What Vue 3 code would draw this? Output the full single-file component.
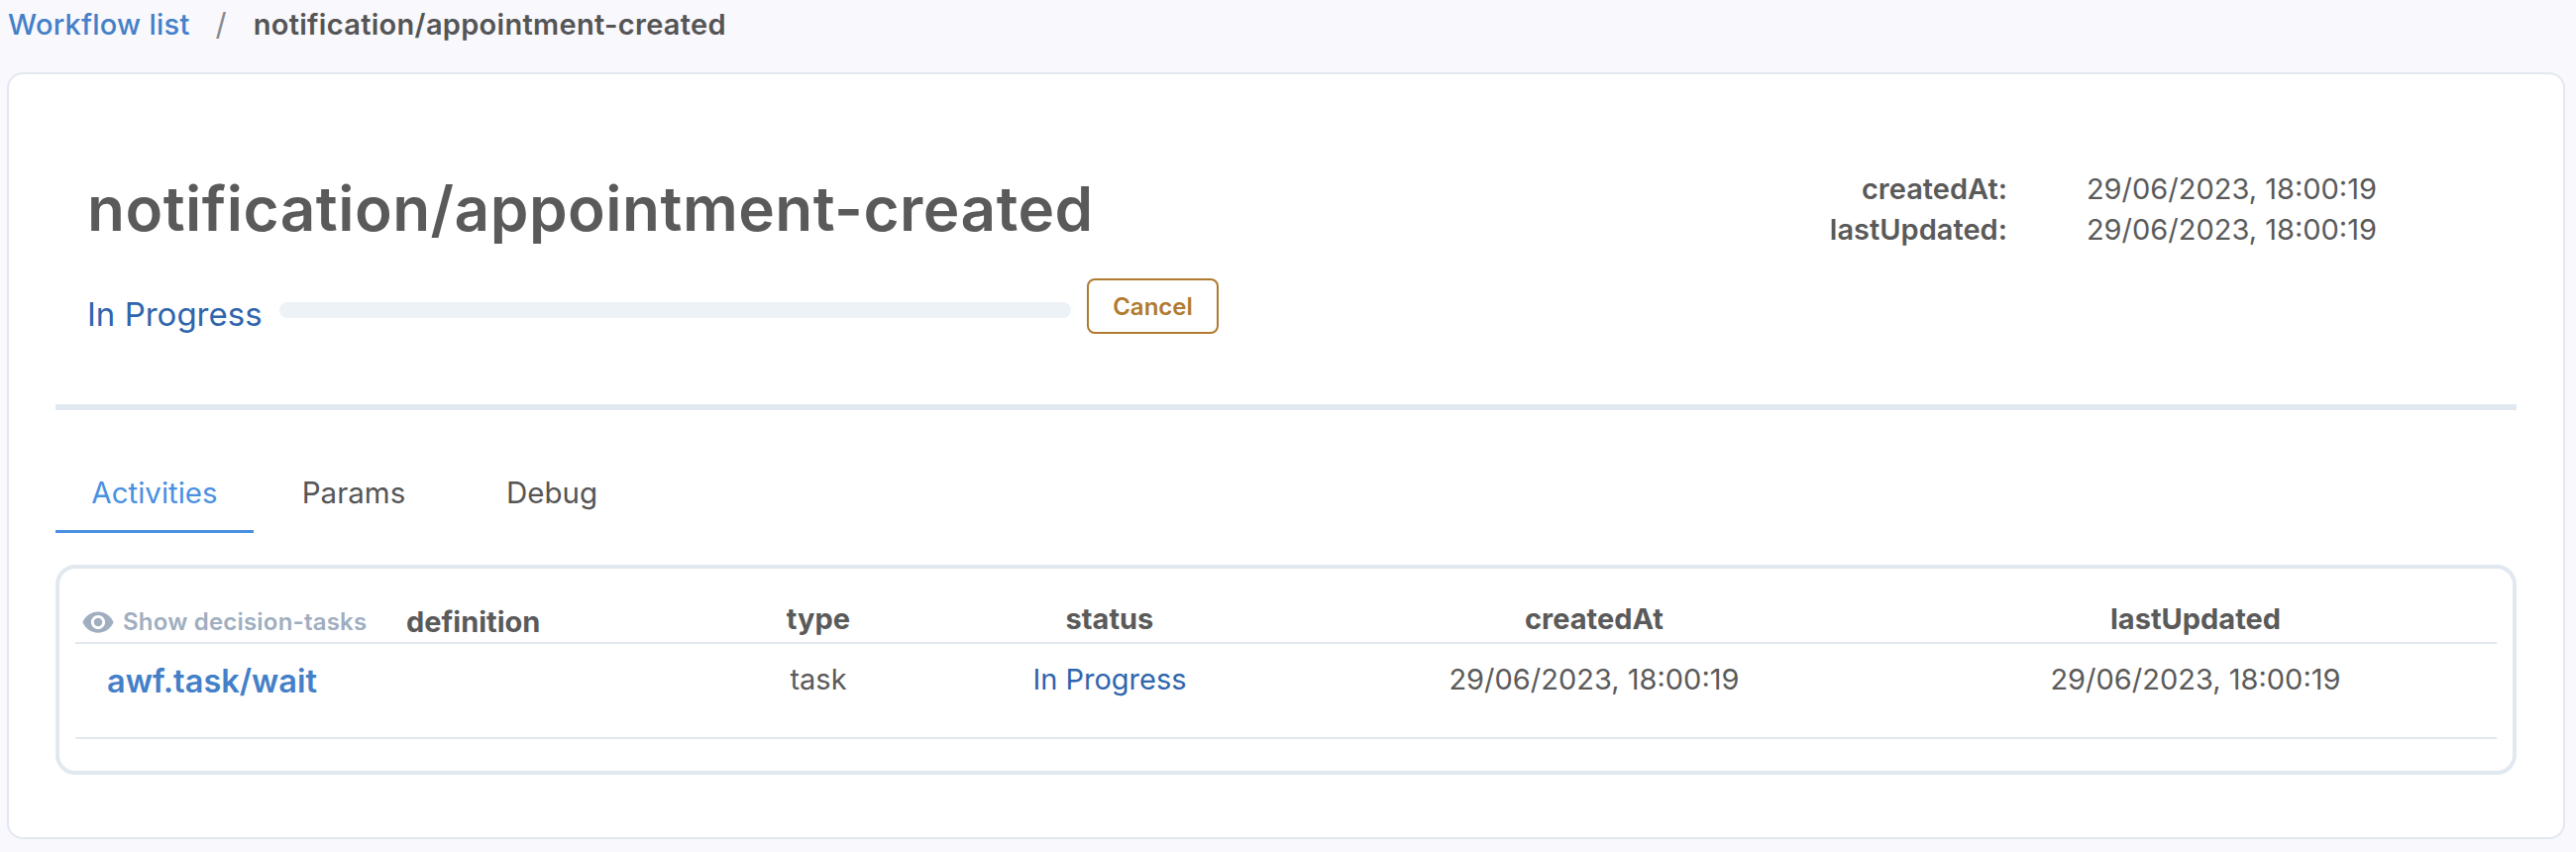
<template>
  <div class="page">
    <nav class="breadcrumb">
      <a class="crumb-link">Workflow list</a>
      <span class="crumb-sep">/</span>
      <span class="crumb-current">{{ workflow.name }}</span>
    </nav>

    <main class="card">
      <header class="summary">
        <div class="summary-left">
          <h1 class="title">{{ workflow.name }}</h1>
          <div class="progress-row">
            <span class="progress-label">{{ workflow.status }}</span>
            <div class="progress-bar"></div>
            <button class="cancel-btn">Cancel</button>
          </div>
        </div>
        <dl class="meta">
          <template v-for="item in meta" :key="item.label">
            <dt>{{ item.label }}:</dt>
            <dd>{{ item.value }}</dd>
          </template>
        </dl>
      </header>

      <div class="divider"></div>

      <div class="tabs">
        <div
          v-for="tab in tabs"
          :key="tab.label"
          class="tab"
          :class="[tab.cls, { active: tab.label === currentTab }]"
        >
          {{ tab.label }}
        </div>
      </div>

      <section class="table-box">
        <div class="table-row table-head">
          <div class="head-first">
            <span class="toggle">
              <svg class="eye" viewBox="0 0 24 24" fill="currentColor">
                <path d="M12 4.5C7 4.5 2.73 7.61 1 12c1.73 4.39 6 7.5 11 7.5s9.27-3.11 11-7.5c-1.73-4.39-6-7.5-11-7.5zM12 17c-2.76 0-5-2.24-5-5s2.24-5 5-5 5 2.24 5 5-2.24 5-5 5zm0-8c-1.66 0-3 1.34-3 3s1.34 3 3 3 3-1.34 3-3-1.34-3-3-3z" />
              </svg>
              Show decision-tasks
            </span>
            <span class="col-definition">definition</span>
          </div>
          <div>type</div>
          <div>status</div>
          <div>createdAt</div>
          <div>lastUpdated</div>
        </div>
        <div v-for="row in rows" :key="row.definition" class="table-row table-body">
          <div class="cell-first"><a class="task-link">{{ row.definition }}</a></div>
          <div>{{ row.type }}</div>
          <div class="status">{{ row.status }}</div>
          <div>{{ row.createdAt }}</div>
          <div>{{ row.lastUpdated }}</div>
        </div>
      </section>
    </main>
  </div>
</template>

<script setup>
import { ref } from 'vue'

const stamp = '29/06/2023, 18:00:19'

const workflow = { name: 'notification/appointment-created', status: 'In Progress' }

const meta = [
  { label: 'createdAt', value: stamp },
  { label: 'lastUpdated', value: stamp },
]

const tabs = [
  { label: 'Activities', cls: 'tab-activities' },
  { label: 'Params', cls: 'tab-params' },
  { label: 'Debug', cls: 'tab-debug' },
]
const currentTab = ref('Activities')

const rows = [
  { definition: 'awf.task/wait', type: 'task', status: 'In Progress', createdAt: stamp, lastUpdated: stamp },
]
</script>

<style>
html,
body {
  background: #f8f8fd;
}
</style>

<style scoped>
.page {
  width: 2600px;
  height: 860px;
  box-sizing: border-box;
  padding: 0 11px 13px 7px;
  display: flex;
  flex-direction: column;
  background: #f8f8fd;
  color: #5a5a5a;
  font-family: Inter, "Liberation Sans", sans-serif;
  overflow: hidden;
}

.breadcrumb {
  height: 73px;
  flex: none;
  box-sizing: border-box;
  padding: 8px 0 0 1px;
  display: flex;
  align-items: flex-start;
  font-size: 29px;
  line-height: 34px;
}

.crumb-link {
  color: #4480c8;
  font-weight: 500;
  letter-spacing: 0.25px;
}

.crumb-sep {
  margin: 0 27px 0 26px;
  color: #8a8a8a;
  font-size: 31px;
}

.crumb-current {
  font-weight: 600;
  letter-spacing: 0.3px;
  color: #555;
}

.card {
  flex: 1;
  box-sizing: border-box;
  background: #fff;
  border: 2px solid #e2e8f0;
  border-radius: 16px;
  padding: 0 47px;
}

.summary {
  height: 333px;
  box-sizing: border-box;
  padding: 0 141px 0 32px;
  display: flex;
  justify-content: space-between;
}

.title {
  margin: 93px 0 0;
  font-size: 62px;
  line-height: 86px;
  font-weight: 600;
  letter-spacing: 0.5px;
  color: #5a5a5a;
}

.progress-row {
  margin-top: 27px;
  display: flex;
  align-items: flex-start;
}

.progress-label {
  margin-top: 16px;
  width: 194px;
  flex: none;
  font-size: 33px;
  line-height: 40px;
  color: #2f65ad;
}

.progress-bar {
  width: 799px;
  height: 16px;
  margin-top: 24px;
  border-radius: 8px;
  background: #edf2f7;
}

.cancel-btn {
  margin-left: 16px;
  width: 133px;
  height: 56px;
  box-sizing: border-box;
  border: 2px solid #b07a30;
  border-radius: 8px;
  background: #fff;
  color: #b07a30;
  font-family: inherit;
  font-size: 24px;
  font-weight: 600;
  padding: 0;
}

.meta {
  margin: 95px 0 0;
  display: grid;
  grid-template-columns: auto auto;
  column-gap: 80px;
  font-size: 29px;
  line-height: 41px;
  align-content: start;
}

.meta dt {
  text-align: right;
  font-weight: 600;
}

.meta dd {
  margin: 0;
}

.divider {
  height: 6px;
  background: #e2e8f0;
}

.tabs {
  height: 124px;
  display: flex;
  align-items: flex-start;
}

.tab {
  box-sizing: border-box;
  height: 124px;
  padding-top: 65px;
  font-size: 29.5px;
  line-height: 36px;
  color: #555;
  text-align: center;
}

.tab-activities {
  width: 200px;
}

.tab-params {
  width: 202px;
}

.tab-debug {
  width: 198px;
}

.tab.active {
  color: #4a90e2;
  border-bottom: 3px solid #4a90e2;
}

.table-box {
  height: 212px;
  box-sizing: border-box;
  margin-top: 32px;
  border: 4px solid #e2e8f0;
  border-radius: 20px;
  padding: 0 16px;
}

.table-row {
  display: grid;
  grid-template-columns: 642px 216px 372px 606px 608px;
  text-align: center;
  font-size: 29px;
}

.table-head {
  height: 76px;
  box-sizing: border-box;
  padding-top: 33px;
  line-height: 36px;
  font-weight: 700;
  border-bottom: 2px solid #e2e8f0;
}

.head-first {
  display: flex;
  align-items: center;
  padding-left: 6px;
  text-align: left;
}

.toggle {
  display: flex;
  align-items: center;
  width: 328px;
  flex: none;
  color: #a0aec0;
  font-size: 24px;
  letter-spacing: 0.2px;
  font-weight: 600;
}

.eye {
  width: 34px;
  height: 34px;
  margin-right: 8px;
}

.table-body {
  height: 96px;
  box-sizing: border-box;
  padding-top: 18px;
  line-height: 36px;
  border-bottom: 2px solid #e2e8f0;
}

.cell-first {
  padding: 2px 0 0 32px;
  text-align: left;
}

.task-link {
  color: #4480c8;
  font-size: 32.5px;
  font-weight: 600;
}

.status {
  color: #2f65ad;
}
</style>
